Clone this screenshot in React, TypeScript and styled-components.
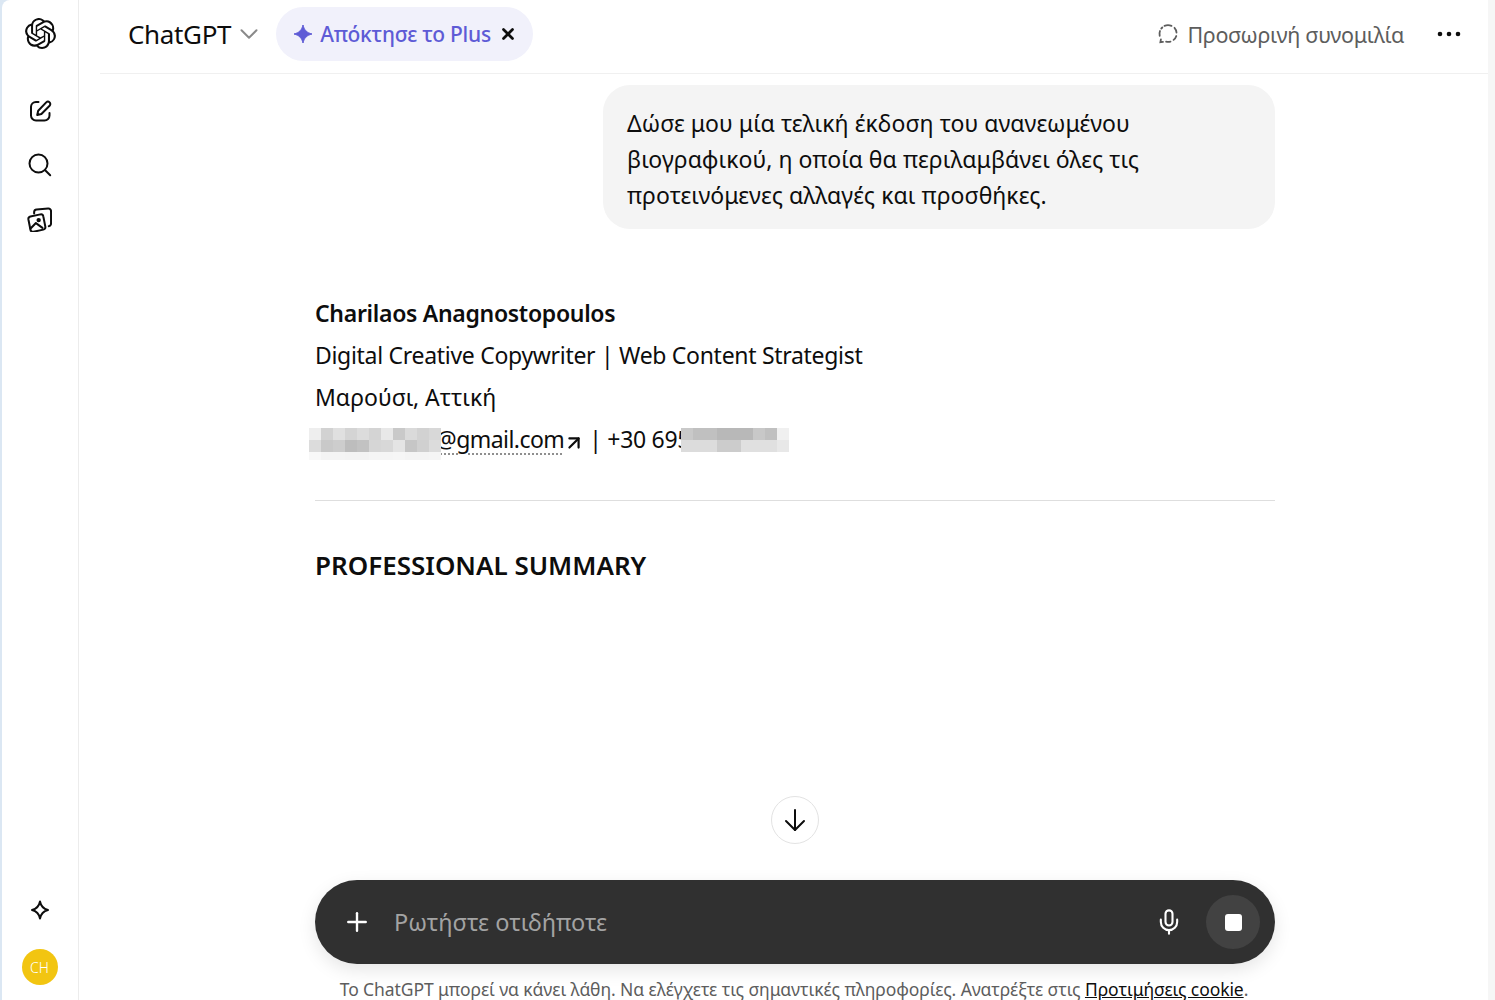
import styled, { createGlobalStyle } from "styled-components";
import { ArrowUpRight, ChevronDown, Mic, Plus, X } from "lucide-react";
import { SiOpenai } from "react-icons/si";

const GlobalStyle = createGlobalStyle`
  html, body {
    margin: 0;
    height: 100%;
    overflow: hidden;
    background: #dbe7f3;
    font-family: "Noto Sans", "Open Sans", "Liberation Sans", sans-serif;
    color: #0d0d0d;
  }
`;

const Shell = styled.div`
  display: flex;
  height: 100vh;
  margin-left: 2px;
  background: #fff;
  border-top-left-radius: 8px;
  overflow: hidden;
`;

const Sidebar = styled.aside`
  display: flex;
  flex-direction: column;
  align-items: center;
  flex: 0 0 77px;
  border-right: 1px solid #ececec;
  padding-top: 18px;
  padding-bottom: 15px;
  box-sizing: border-box;
  height: 100%;
`;

const LogoSlot = styled.div`
  display: flex;
  height: 32px;
  margin-bottom: 49px;
`;

const NavIcons = styled.nav`
  display: flex;
  flex-direction: column;
  align-items: center;
  gap: 30px;
  margin-left: -1px;
`;

const NavSlot = styled.div`
  display: flex;
  align-items: center;
  justify-content: center;
  width: 26px;
  height: 24px;
`;

const SidebarFoot = styled.div`
  display: flex;
  flex-direction: column;
  align-items: center;
  gap: 29px;
  margin-top: auto;
  margin-left: -1px;
`;

const Avatar = styled.div`
  display: flex;
  align-items: center;
  justify-content: center;
  width: 36px;
  height: 36px;
  border-radius: 50%;
  background: #f2c511;
  color: #fff;
  font-size: 14px;
  font-weight: 300;
`;

const Main = styled.main`
  display: flex;
  flex-direction: column;
  flex: 1;
  min-width: 0;
  margin-left: 21px;
  height: 100%;
`;

const ScrollTrack = styled.div`
  flex: 0 0 7px;
  background: #f6f6f6;
`;

const Header = styled.header`
  display: flex;
  align-items: center;
  flex: 0 0 74px;
  box-sizing: border-box;
  border-bottom: 1px solid #f0f0f0;
  padding: 0 27px 5px 28px;
`;

const ModelName = styled.div`
  font-size: 26px;
  letter-spacing: -0.35px;
  color: #0d0d0d;
`;

const Chevron = styled(ChevronDown)`
  margin-left: 3px;
  color: #8a8a8a;
`;

const PlusPill = styled.div`
  display: flex;
  align-items: center;
  height: 54px;
  margin-left: 12px;
  padding: 0 16px 0 17px;
  box-sizing: border-box;
  border-radius: 27px;
  background: #f1f1fb;
  color: #5e5bd6;
  font-size: 21px;
  font-weight: 500;
  letter-spacing: -0.24px;
`;

const PillText = styled.span`
  margin-left: 7px;
`;

const PillClose = styled(X)`
  margin-left: 8px;
  color: #0d0d0d;
`;

const HeaderRight = styled.div`
  display: flex;
  align-items: center;
  margin-left: auto;
  color: #5d5d5d;
`;

const TempLabel = styled.span`
  margin-left: 8px;
  font-size: 21.5px;
  letter-spacing: -0.3px;
`;

const Dots = styled.svg`
  margin-left: 33px;
`;

const Thread = styled.div`
  flex: 1;
  display: flex;
  flex-direction: column;
  width: 960px;
  margin-left: 215px;
  min-height: 0;
  padding-top: 11px;
`;

const Bubble = styled.div`
  align-self: flex-end;
  box-sizing: border-box;
  width: 672px;
  height: 144px;
  padding: 20px 24px;
  border-radius: 27px;
  background: #f4f4f4;
  font-size: 23px;
  line-height: 36px;
  letter-spacing: 0.05px;
`;

const Answer = styled.section`
  margin-top: 63px;
  font-size: 23px;
  line-height: 42px;
`;

const Line = styled.div<{ $latin?: boolean }>`
  position: relative;
  white-space: nowrap;
  letter-spacing: ${(p) => (p.$latin ? "-0.3px" : "0")};
`;

const Name = styled(Line)`
  font-weight: 600;
`;

const Mail = styled.span`
  margin-left: 121px;
  letter-spacing: -0.55px;
  text-decoration: underline dotted #8f8f8f 1.5px;
  text-underline-offset: 5px;
`;

const LinkArrow = styled(ArrowUpRight)`
  margin: 0 4px 0 -1px;
  vertical-align: -6px;
`;

const Mosaic = styled.div<{ $left: number; $columns: number }>`
  position: absolute;
  top: 10px;
  left: ${(p) => p.$left}px;
  display: grid;
  grid-template-columns: repeat(${(p) => p.$columns}, 12px);
  grid-auto-rows: 12px;
`;

const Cell = styled.div<{ $tone: string; $short?: boolean }>`
  background: ${(p) => p.$tone};
  height: ${(p) => (p.$short ? 8 : 12)}px;
`;

const Rule = styled.hr`
  margin: 40px 0 0;
  border: 0;
  border-top: 1px solid #dedede;
`;

const SectionTitle = styled.h2`
  margin: 45px 0 0;
  font-size: 26px;
  line-height: 38px;
  font-weight: 600;
`;

const ScrollButton = styled.div`
  display: flex;
  align-items: center;
  justify-content: center;
  align-self: center;
  box-sizing: border-box;
  width: 48px;
  height: 48px;
  margin-top: auto;
  margin-bottom: 36px;
  border: 1px solid #e3e3e3;
  border-radius: 50%;
  background: #fff;
`;

const Composer = styled.div`
  display: flex;
  align-items: center;
  flex: 0 0 84px;
  box-sizing: border-box;
  width: 960px;
  margin-left: 215px;
  padding: 0 15px 0 27px;
  border-radius: 42px;
  background: #303030;
  box-shadow: 0 6px 18px rgba(0, 0, 0, 0.1);
  color: #fff;
`;

const Placeholder = styled.span`
  margin-left: 22px;
  font-size: 23.5px;
  color: #a3a3a3;
`;

const MicIcon = styled(Mic)`
  margin-left: auto;
`;

const StopButton = styled.div`
  display: flex;
  align-items: center;
  justify-content: center;
  width: 54px;
  height: 54px;
  margin-left: 23px;
  border-radius: 50%;
  background: #424242;
`;

const StopSquare = styled.div`
  width: 17px;
  height: 17px;
  border-radius: 3px;
  background: #fff;
`;

const Disclaimer = styled.div`
  flex: 0 0 36px;
  min-height: 0;
  overflow: hidden;
  text-align: center;
  font-size: 17.5px;
  line-height: 50px;
  letter-spacing: -0.08px;
  color: #5d5d5d;
  white-space: nowrap;
`;

const CookieLink = styled.span`
  color: #0d0d0d;
  text-decoration: underline;
`;

const emailCells = [
  "#eeeeee", "#d2d2d2", "#e0e0e0", "#d4d4d4", "#dcdcdc", "#d4d4d4", "#e8e8e8", "#c9c9c9", "#dadada", "#d2d2d2", "#d8d8d8",
  "#dcdcdc", "#c9c9c9", "#cdcdcd", "#bdbdbd", "#c2c2c2", "#d6d6d6", "#d8d8d8", "#e4e4e4", "#c6c6c6", "#d0d0d0", "#dcdcdc",
  "#f8f8f8", "#f4f4f4", "#f4f4f4", "#f3f3f3", "#f3f3f3", "#f5f5f5", "#f5f5f5", "#f6f6f6", "#f4f4f4", "#f4f4f4", "#f5f5f5",
];

const phoneCells = [
  "#c9c9c9", "#c0c0c0", "#c0c0c0", "#b8b8b8", "#b8b8b8", "#b8b8b8", "#c8c8c8", "#c0c0c0", "#f0f0f0",
  "#dcdcdc", "#dcdcdc", "#dcdcdc", "#cccccc", "#cccccc", "#e0e0e0", "#e0e0e0", "#e0e0e0", "#e8e8e8",
];

function EditIcon() {
  return (
    <svg width="24" height="24" viewBox="0 0 24 24" fill="none" stroke="#0d0d0d" strokeWidth="2" strokeLinecap="round" strokeLinejoin="round">
      <path d="M10.500 3H8a5 5 0 0 0-5 5v8.500a5 5 0 0 0 5 5h8.500a5 5 0 0 0 5-5V14" />
      <path d="M18.200 3.400a2.400 2.400 0 0 1 3.400 3.400l-8.200 8.200-4.200 1 1-4.200z" />
    </svg>
  );
}

function SearchIcon() {
  return (
    <svg width="24" height="24" viewBox="0 0 24 24" fill="none" stroke="#0d0d0d" strokeWidth="2" strokeLinecap="round">
      <circle cx="10.500" cy="10.500" r="9" />
      <path d="M17.200 17.200l5 5" />
    </svg>
  );
}

function LibraryIcon() {
  return (
    <svg width="25" height="25" viewBox="2 1 21 21" fill="none" stroke="#0d0d0d" strokeWidth="1.700" strokeLinecap="round" strokeLinejoin="round">
      <path d="M3.200 11.500c-.2-1.200.5-2.200 1.700-2.500l8.300-1.800c1.200-.2 2.300.5 2.500 1.700l1.700 8.600c.2 1.200-.5 2.200-1.700 2.500l-8.300 1.800c-1.200.2-2.300-.5-2.500-1.700z" />
      <path d="M8 6.500V5.300c0-1.200.9-2.100 2.100-2.200l9.700-.8c1.300-.1 2.400.9 2.400 2.200v10.300c0 1.200-.8 2.100-1.900 2.300" />
      <path d="M5 19l4.500-4.500 5.500 4" />
      <circle cx="11.800" cy="12" r="1" fill="#0d0d0d" />
    </svg>
  );
}

function SparkleOutline() {
  return (
    <svg width="20" height="20" viewBox="0 0 20 20" fill="none" stroke="#0d0d0d" strokeWidth="2" strokeLinejoin="round">
      <path d="M10 1.500c.9 4.800 3 7.200 8 8.500-5 1.300-7.100 3.700-8 8.500-.9-4.800-3-7.200-8-8.500 5-1.300 7.100-3.700 8-8.500z" />
    </svg>
  );
}

function SparkleFilled() {
  return (
    <svg width="20" height="20" viewBox="0 0 20 20" fill="#5e5bd6" stroke="#5e5bd6" strokeWidth="1" strokeLinejoin="round">
      <path d="M10 1c1.200 5 3.700 7.700 9 9-5.300 1.300-7.800 4-9 9-1.200-5-3.700-7.700-9-9 5.300-1.300 7.800-4 9-9z" />
    </svg>
  );
}

function TempChatIcon() {
  return (
    <svg width="22" height="22" viewBox="0 0 22 22" fill="none" stroke="#5d5d5d" strokeWidth="1.800" strokeLinecap="round">
      <path d="M7.500 2.800c2.200-.9 4.800-.9 7 0" />
      <path d="M17.500 4.800c1.200 1.300 1.900 3 2 4.700" />
      <path d="M19.300 13c-.5 1.600-1.400 2.900-2.700 3.900" />
      <path d="M13.500 18.600c-1.400.4-3 .4-4.400.1" />
      <path d="M6 18.800l-2.600.4.500-2.800" />
      <path d="M2.700 12.800c-.4-1.600-.3-3.300.3-4.800" />
      <path d="M4.300 5.500l1-1" />
    </svg>
  );
}

function ArrowDownIcon() {
  return (
    <svg width="24" height="24" viewBox="0 0 24 24" fill="none" stroke="#0d0d0d" strokeWidth="2" strokeLinecap="round" strokeLinejoin="round">
      <path d="M12 2v20" />
      <path d="M3 13l9 9 9-9" />
    </svg>
  );
}

export default function App() {
  return (
    <>
      <GlobalStyle />
      <Shell>
        <Sidebar>
          <LogoSlot>
            <SiOpenai size={31} color="#0d0d0d" />
          </LogoSlot>
          <NavIcons>
            <NavSlot>
              <EditIcon />
            </NavSlot>
            <NavSlot>
              <SearchIcon />
            </NavSlot>
            <NavSlot>
              <LibraryIcon />
            </NavSlot>
          </NavIcons>
          <SidebarFoot>
            <SparkleOutline />
            <Avatar>CH</Avatar>
          </SidebarFoot>
        </Sidebar>
        <Main>
          <Header>
            <ModelName>ChatGPT</ModelName>
            <Chevron size={30} strokeWidth={1.6} />
            <PlusPill>
              <SparkleFilled />
              <PillText>Απόκτησε το Plus</PillText>
              <PillClose size={18} strokeWidth={3.6} />
            </PlusPill>
            <HeaderRight>
              <TempChatIcon />
              <TempLabel>Προσωρινή συνομιλία</TempLabel>
              <Dots width="24" height="6" viewBox="0 0 24 6" fill="#0d0d0d">
                <circle cx="3" cy="3" r="2.300" />
                <circle cx="12" cy="3" r="2.300" />
                <circle cx="21" cy="3" r="2.300" />
              </Dots>
            </HeaderRight>
          </Header>
          <Thread>
            <Bubble>
              Δώσε μου μία τελική έκδοση του ανανεωμένου
              <br />
              βιογραφικού, η οποία θα περιλαμβάνει όλες τις
              <br />
              προτεινόμενες αλλαγές και προσθήκες.
            </Bubble>
            <Answer>
              <Name $latin>Charilaos Anagnostopoulos</Name>
              <Line $latin>Digital Creative Copywriter | Web Content Strategist</Line>
              <Line>Μαρούσι, Αττική</Line>
              <Line $latin>
                <Mail>@gmail.com</Mail>
                <LinkArrow size={22} strokeWidth={2.4} />| +30 695
                <Mosaic $left={-6} $columns={11}>
                  {emailCells.map((tone, i) => (
                    <Cell key={i} $tone={tone} $short={i >= 22} />
                  ))}
                </Mosaic>
                <Mosaic $left={366} $columns={9}>
                  {phoneCells.map((tone, i) => (
                    <Cell key={i} $tone={tone} />
                  ))}
                </Mosaic>
              </Line>
              <Rule />
              <SectionTitle>PROFESSIONAL SUMMARY</SectionTitle>
            </Answer>
            <ScrollButton>
              <ArrowDownIcon />
            </ScrollButton>
          </Thread>
          <Composer>
            <Plus size={30} strokeWidth={1.9} />
            <Placeholder>Ρωτήστε οτιδήποτε</Placeholder>
            <MicIcon size={28} strokeWidth={1.8} />
            <StopButton>
              <StopSquare />
            </StopButton>
          </Composer>
          <Disclaimer>
            Το ChatGPT μπορεί να κάνει λάθη. Να ελέγχετε τις σημαντικές πληροφορίες. Ανατρέξτε στις <CookieLink>Προτιμήσεις cookie</CookieLink>.
          </Disclaimer>
        </Main>
        <ScrollTrack />
      </Shell>
    </>
  );
}
